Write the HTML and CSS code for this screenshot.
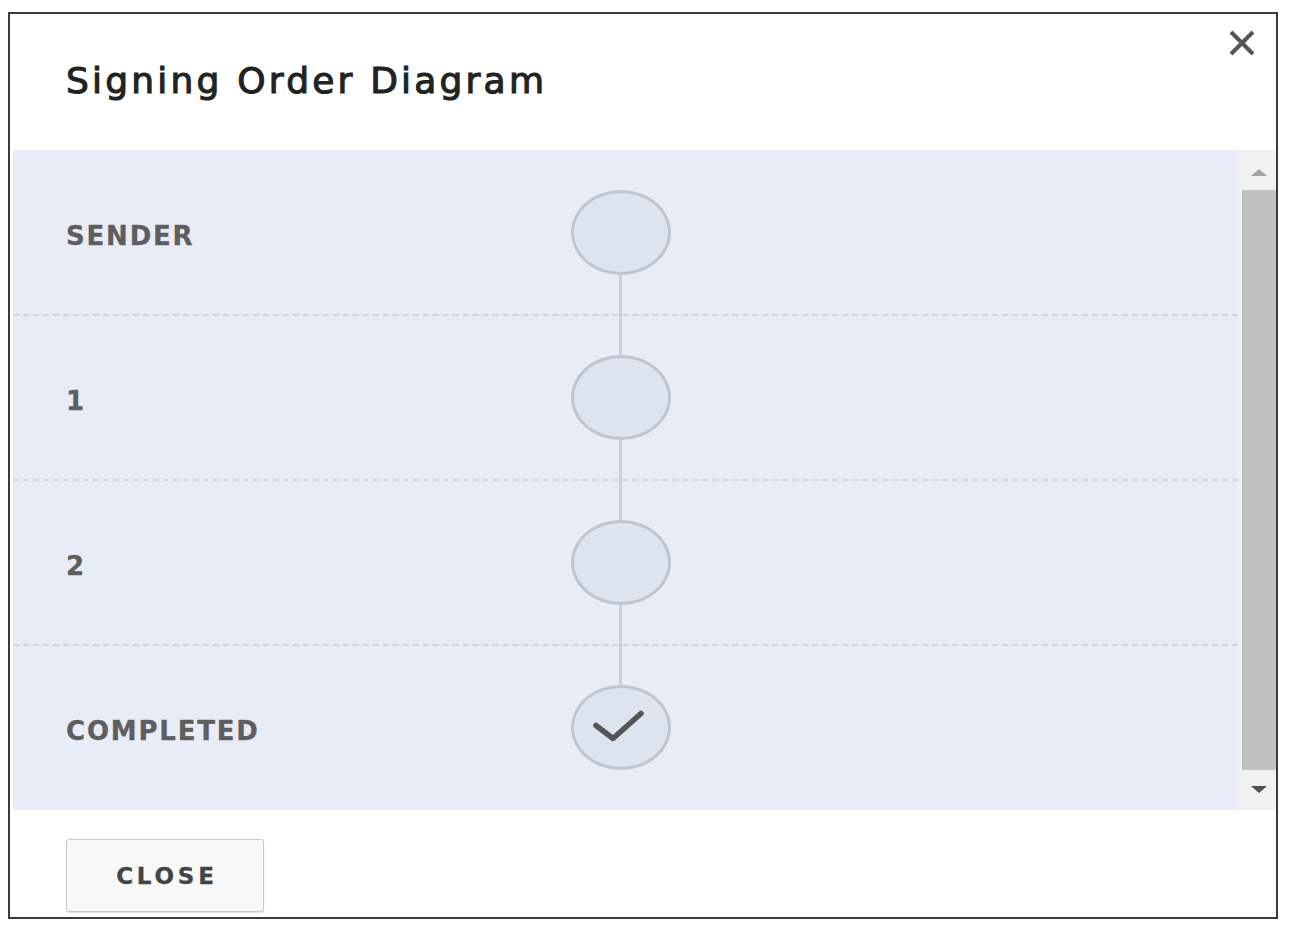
FILE: index.html
```html
<!DOCTYPE html>
<html lang="en">
<head>
<meta charset="utf-8">
<title>Signing Order Diagram</title>
<link rel="stylesheet" href="styles.css">
</head>
<body>
<div class="dialog">
  <div class="dialog-header">
    <h1 class="dialog-title">Signing Order Diagram</h1>
    <button class="close-x" aria-label="Close">
      <svg width="28" height="28" viewBox="0 0 28 28"><path d="M3 3L25 25M25 3L3 25" stroke="#555" stroke-width="4" stroke-linecap="butt"/></svg>
    </button>
  </div>
  <div class="dialog-body">
    <div class="pane">
      <div class="track-line"></div>
      <div class="row">
        <div class="label">SENDER</div>
        <div class="node-cell"><div class="node"></div></div>
      </div>
      <div class="row">
        <div class="label">1</div>
        <div class="node-cell"><div class="node"></div></div>
      </div>
      <div class="row">
        <div class="label">2</div>
        <div class="node-cell"><div class="node"></div></div>
      </div>
      <div class="row">
        <div class="label">COMPLETED</div>
        <div class="node-cell">
          <div class="node">
            <svg width="100" height="85" viewBox="0 0 100 85"><path d="M25 40.5L42 53.5L70 28.5" fill="none" stroke="#555" stroke-width="5.5" stroke-linecap="round" stroke-linejoin="round"/></svg>
          </div>
        </div>
      </div>
    </div>
    <div class="scrollbar">
      <div class="arrow arrow-up"></div>
      <div class="thumb-area"><div class="thumb"></div></div>
      <div class="arrow arrow-down"></div>
    </div>
  </div>
  <div class="dialog-footer">
    <button class="btn-close">CLOSE</button>
  </div>
</div>
</body>
</html>
```

FILE: styles.css
```css
* { box-sizing: border-box; }
html, body { margin: 0; padding: 0; background: #fff; }
body { font-family: "DejaVu Sans", Verdana, sans-serif; }

.dialog {
  margin: 12px 0 0 8px;
  width: 1270px;
  height: 907px;
  border: 2px solid #3a3a3a;
  display: flex;
  flex-direction: column;
  background: #fff;
}

.dialog-header {
  position: relative;
  height: 136px;
  padding-left: 56px;
  display: flex;
  align-items: center;
}
.dialog-title {
  margin: 0;
  margin-top: -4px;
  font-size: 36px;
  font-weight: normal;
  letter-spacing: 3.2px;
  color: #222;
  -webkit-text-stroke: 1.1px #222;
}
.close-x {
  position: absolute;
  top: 15px;
  right: 20px;
  padding: 0;
  border: 0;
  background: none;
  width: 28px;
  height: 28px;
}
.close-x svg { display: block; }

.dialog-body {
  height: 660px;
  margin-left: 3px;
  display: flex;
}
.pane {
  position: relative;
  flex: 1;
  background: #e8ecf6;
  display: flex;
  flex-direction: column;
}
.track-line {
  position: absolute;
  left: 606px;
  width: 3px;
  top: 82px;
  height: 492px;
  background: #cbd0da;
}
.row {
  position: relative;
  height: 165px;
  display: flex;
  align-items: center;
}
.row + .row::before {
  content: "";
  position: absolute;
  left: 0;
  right: 0;
  top: -1px;
  border-top: 2px dashed #d0d4dc;
}
.label {
  width: 558px;
  padding-left: 53px;
  padding-top: 6px;
  font-size: 26px;
  font-weight: bold;
  letter-spacing: 1.8px;
  color: #5e5e5e;
  -webkit-text-stroke: 0.3px #5e5e5e;
}
.node-cell {
  position: relative;
  z-index: 1;
}
.node {
  width: 100px;
  height: 85px;
  border-radius: 50%;
  border: 3px solid #bfc5d0;
  background: #dee3f0;
  display: flex;
  align-items: center;
  justify-content: center;
  overflow: hidden;
}
.node svg { display: block; flex: none; }

.scrollbar {
  width: 38px;
  background: #f1f1f1;
  display: flex;
  flex-direction: column;
}
.arrow {
  height: 40px;
  display: flex;
  align-items: center;
  justify-content: center;
  padding-left: 4px;
}
.arrow::after {
  content: "";
  width: 0;
  height: 0;
  border-left: 8px solid transparent;
  border-right: 8px solid transparent;
}
.arrow-up::after { border-bottom: 7px solid #a3a3a3; margin-top: 4px; }
.arrow-down::after { border-top: 7px solid #505050; margin-bottom: 2px; }
.thumb-area {
  flex: 1;
  padding-left: 4px;
}
.thumb {
  height: 100%;
  background: #c1c1c1;
}

.dialog-footer {
  flex: 1;
  padding: 29px 0 0 56px;
}
.btn-close {
  width: 198px;
  height: 73px;
  border: 1px solid #c9c9c9;
  border-radius: 3px;
  background: #f8f8f8;
  box-shadow: 0 1px 1px rgba(0,0,0,0.12);
  font-family: "DejaVu Sans", Verdana, sans-serif;
  font-size: 23px;
  font-weight: bold;
  letter-spacing: 3.8px;
  text-indent: 3.8px;
  color: #444;
  -webkit-text-stroke: 0.3px #444;
  padding: 0;
}
```
